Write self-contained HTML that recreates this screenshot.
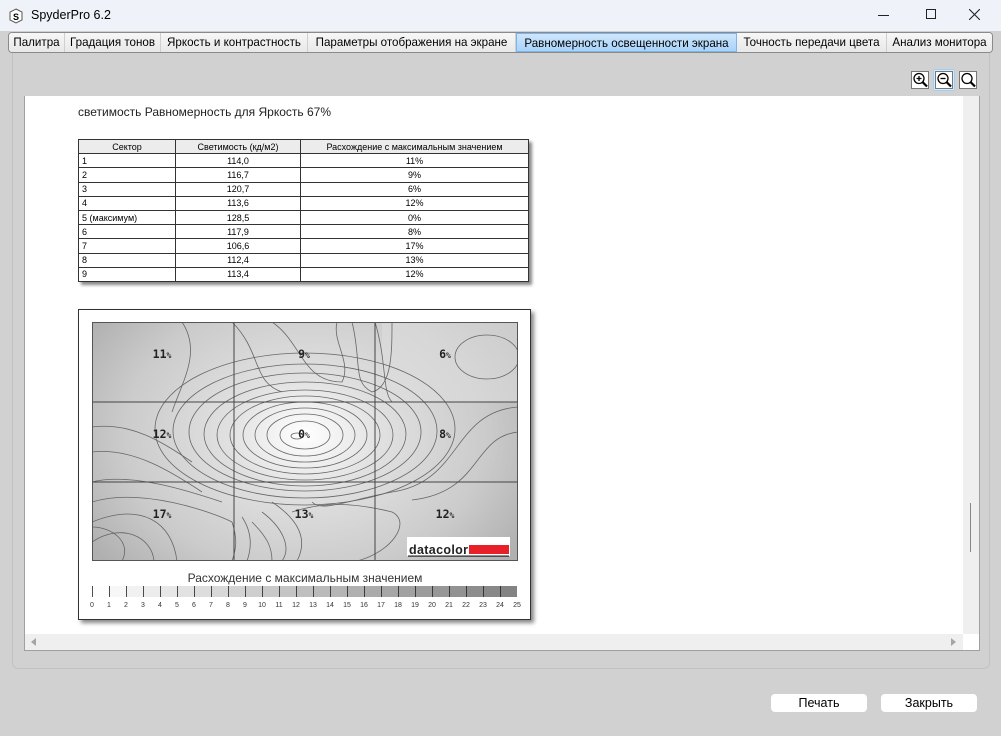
<!DOCTYPE html>
<html><head><meta charset="utf-8"><style>
*{margin:0;padding:0;box-sizing:border-box}
body{width:1001px;height:736px;overflow:hidden;background:#d1d1d1;font-family:"Liberation Sans","DejaVu Sans",sans-serif;position:relative}
.abs{position:absolute}
#title{left:0;top:0;width:1001px;height:31px;background:#eff3f9;}
#tabs{left:8px;top:32px;width:985px;height:21px;border:1px solid #8a8a8a;border-radius:4px;background:#f0f0f0;display:flex;font-size:11.6px;overflow:hidden}
#tabs div{text-align:center;line-height:19px;border-right:1px solid #cfcfcf;white-space:nowrap;overflow:hidden;background:linear-gradient(#f7f7f7,#e8e8e8);flex:none}
#tabs div.act{background:linear-gradient(#cde6fc,#a9d3fa);border:1px solid #7eb4ea}
table{border-collapse:collapse;font-size:9px;font-family:"Liberation Sans",sans-serif}
td{border:1px solid #333;height:14.2px;padding:0 3px;line-height:12px}
.btn{background:#fff;border-radius:4px;font-size:12.5px;text-align:center;line-height:18px;height:18px;top:694px}
</style></head><body>
<div id="title" class="abs">
 <svg class="abs" style="left:8px;top:8px" width="16" height="16"><path d="M8 1 L14 4 L14 12 L8 15 L2 12 L2 4 Z" fill="#fff" stroke="#555" stroke-width="1"/><text x="8" y="12" font-size="9" font-weight="bold" text-anchor="middle" font-family="Liberation Sans">S</text></svg>
 <div class="abs" style="left:31px;top:8px;font-size:12.5px">SpyderPro 6.2</div>
 <div class="abs" style="left:878px;top:15px;width:11px;height:1px;background:#222"></div>
 <div class="abs" style="left:926px;top:9px;width:10px;height:10px;border:1px solid #222"></div>
 <svg class="abs" style="left:969px;top:9px" width="11" height="11"><path d="M0 0L11 11M11 0L0 11" stroke="#222" stroke-width="1.1"/></svg>
</div>
<div id="tabs" class="abs">
 <div style="width:56px">Палитра</div><div style="width:96px">Градация тонов</div><div style="width:147px">Яркость и контрастность</div><div style="width:208px">Параметры отображения на экране</div><div class="act" style="width:221px">Равномерность освещенности экрана</div><div style="width:150px">Точность передачи цвета</div><div style="width:105px;border-right:none">Анализ монитора</div>
</div>
<div class="abs" style="left:12px;top:53px;width:978px;height:616px;border:1px solid #c2c2c2;border-top:none;border-radius:0 0 6px 6px"></div>
<div class="abs" style="left:911px;top:71px;width:18px;height:18px;border:1px solid #777;background:#fff"></div>
<div class="abs" style="left:933px;top:69px;width:22px;height:22px;border:1px solid #9cd0f8;background:#d8ecfb;border-radius:2px"></div>
<div class="abs" style="left:935px;top:71px;width:18px;height:18px;border:1px solid #777;background:#fff"></div>
<div class="abs" style="left:959px;top:71px;width:18px;height:18px;border:1px solid #777;background:#fff"></div>
<svg class="abs" style="left:911px;top:71px" width="70" height="18">
 <g fill="none" stroke="#000" stroke-width="1.3"><circle cx="8" cy="7.5" r="5"/><path d="M11.5 11 L16 15.5" stroke-width="2.2"/><path d="M5.5 7.5h5M8 5v5"/>
 <circle cx="32" cy="7.5" r="5"/><path d="M35.5 11 L40 15.5" stroke-width="2.2"/><path d="M29.5 7.5h5"/>
 <circle cx="56" cy="7.5" r="5"/><path d="M59.5 11 L64 15.5" stroke-width="2.2"/></g>
</svg>
<div class="abs" style="left:24px;top:96px;width:956px;height:555px;border:1px solid #a0a0a0;border-top:none;background:#fff"></div>
<div class="abs" style="left:963px;top:96px;width:16px;height:538px;background:#efefef"></div>
<div class="abs" style="left:970px;top:503px;width:1px;height:49px;background:#888"></div>
<div class="abs" style="left:25px;top:634px;width:938px;height:16px;background:#efefef"></div>
<svg class="abs" style="left:28px;top:636px" width="935" height="12"><path d="M3 6L8 2V10Z M928 6L923 2V10Z" fill="#a5a5a5"/></svg>
<div class="abs" style="left:78px;top:105px;font-size:12px;color:#222">светимость Равномерность для Яркость 67%</div>
<div class="abs" style="left:78px;top:139px;box-shadow:3px 3px 3px #888;background:#fff">
<table style="width:451px">
<tr style="background:#ececec;text-align:center"><td style="width:97px">Сектор</td><td style="width:125px">Светимость (кд/м2)</td><td>Расхождение с максимальным значением</td></tr>
<tr><td>1</td><td align=center>114,0</td><td align=center>11%</td></tr>
<tr><td>2</td><td align=center>116,7</td><td align=center>9%</td></tr>
<tr><td>3</td><td align=center>120,7</td><td align=center>6%</td></tr>
<tr><td>4</td><td align=center>113,6</td><td align=center>12%</td></tr>
<tr><td>5 (максимум)</td><td align=center>128,5</td><td align=center>0%</td></tr>
<tr><td>6</td><td align=center>117,9</td><td align=center>8%</td></tr>
<tr><td>7</td><td align=center>106,6</td><td align=center>17%</td></tr>
<tr><td>8</td><td align=center>112,4</td><td align=center>13%</td></tr>
<tr><td>9</td><td align=center>113,4</td><td align=center>12%</td></tr>
</table></div>
<div class="abs" style="left:78px;top:309px;width:453px;height:311px;border:1px solid #333;background:#fff;box-shadow:3px 3px 4px #888"></div>
<svg class="abs" style="left:92px;top:322px" width="426" height="239" font-family="DejaVu Sans Mono,monospace">
<defs><radialGradient id="g" cx="213" cy="113" r="260" gradientUnits="userSpaceOnUse" gradientTransform="translate(213 113) scale(1 0.75) translate(-213 -113)"><stop offset="0" stop-color="#fff"/><stop offset="0.3" stop-color="#e0e0e0"/><stop offset="0.7" stop-color="#cbcbcb"/><stop offset="1" stop-color="#b0b0b0"/></radialGradient></defs>
<rect width="426" height="239" fill="url(#g)"/>
<rect x="290" y="0" width="136" height="80" fill="#dedede" opacity=".6"/>
<g fill="none" stroke="#666" stroke-width=".8">
<ellipse cx="205" cy="114" rx="6" ry="3"/>
<ellipse cx="213" cy="113" rx="25" ry="14"/>
<ellipse cx="213" cy="113" rx="38" ry="21"/>
<ellipse cx="213" cy="113" rx="50" ry="27"/>
<ellipse cx="213" cy="113" rx="62" ry="33"/>
<ellipse cx="213" cy="113" rx="75" ry="39"/>
<ellipse cx="213" cy="113" rx="88" ry="45"/>
<ellipse cx="213" cy="112" rx="101" ry="52"/>
<ellipse cx="213" cy="110" rx="116" ry="59"/>
<ellipse cx="213" cy="109" rx="132" ry="67"/>
<ellipse cx="213" cy="107" rx="150" ry="76"/>
<ellipse cx="395" cy="35" rx="32" ry="22"/>
<path d="M90 0 C110 30 90 60 80 90"/>
<path d="M140 0 C170 30 160 60 190 70"/>
<path d="M180 0 C210 20 210 60 250 60 C260 40 240 20 245 0"/>
<path d="M260 0 C270 40 260 60 280 70 C300 65 300 30 300 0"/>
<path d="M283 0 C295 40 290 70 300 80"/>
<path d="M426 85 C360 90 370 160 300 170 C250 180 230 190 220 180"/>
<path d="M426 110 C380 115 390 170 320 178"/>
<path d="M0 105 C40 100 70 120 100 140"/>
<path d="M0 130 C40 125 80 150 110 170"/>
<path d="M0 160 C40 150 100 170 130 180"/>
<path d="M0 180 C50 165 120 190 140 200"/>
<path d="M0 200 C50 180 80 200 85 239"/>
<path d="M0 220 C30 200 60 215 62 239"/>
<path d="M150 195 C160 210 160 225 155 239"/>
<path d="M140 200 C145 215 145 225 140 239"/>
<path d="M160 200 C175 215 180 225 180 239"/>
<path d="M170 190 C190 205 200 225 190 239"/>
<path d="M180 180 C210 200 215 220 205 239"/>
<path d="M200 190 C230 180 260 180 300 190 C320 200 300 230 265 239"/>
<path d="M30 239 C40 220 20 205 0 205"/>
</g>
<g stroke="#444" stroke-width="1"><path d="M142 0V239M283 0V239M0 80H426M0 160H426"/></g>
<rect x=".5" y=".5" width="425" height="238" fill="none" stroke="#555"/>
<g font-size="11.5" font-weight="bold" fill="#222" text-anchor="middle">
<text x="70" y="36">11<tspan font-size="8">%</tspan></text><text x="212" y="36">9<tspan font-size="8">%</tspan></text><text x="353" y="36">6<tspan font-size="8">%</tspan></text>
<text x="70" y="116">12<tspan font-size="8">%</tspan></text><text x="212" y="116">0<tspan font-size="8">%</tspan></text><text x="353" y="116">8<tspan font-size="8">%</tspan></text>
<text x="70" y="196">17<tspan font-size="8">%</tspan></text><text x="212" y="196">13<tspan font-size="8">%</tspan></text><text x="353" y="196">12<tspan font-size="8">%</tspan></text>
</g>
<rect x="315" y="215" width="103" height="19" fill="#fff"/>
<text x="317" y="232" font-family="Liberation Sans" font-weight="bold" font-size="12.5" fill="#222" textLength="59">datacolor</text>
<rect x="377" y="223" width="40" height="9" fill="#e8202a"/>
<rect x="316" y="233.5" width="101" height="1.2" fill="#222"/>
</svg>
<div class="abs" style="left:92px;top:571px;width:426px;text-align:center;font-size:12px;color:#333">Расхождение с максимальным значением</div>
<svg class="abs" style="left:88px;top:585px" width="436" height="26" font-family="Liberation Sans" font-size="7" fill="#333">
<rect x="4" y="1" width="17" height="11" fill="#fdfdfd"/><rect x="21" y="1" width="17" height="11" fill="#f7f7f7"/><rect x="38" y="1" width="17" height="11" fill="#f1f1f1"/><rect x="55" y="1" width="17" height="11" fill="#ececec"/><rect x="72" y="1" width="17" height="11" fill="#e7e7e7"/><rect x="89" y="1" width="17" height="11" fill="#e2e2e2"/><rect x="106" y="1" width="17" height="11" fill="#dddddd"/><rect x="123" y="1" width="17" height="11" fill="#d8d8d8"/><rect x="140" y="1" width="17" height="11" fill="#d3d3d3"/><rect x="157" y="1" width="17" height="11" fill="#cecece"/><rect x="174" y="1" width="17" height="11" fill="#c9c9c9"/><rect x="191" y="1" width="17" height="11" fill="#c4c4c4"/><rect x="208" y="1" width="17" height="11" fill="#bfbfbf"/><rect x="225" y="1" width="17" height="11" fill="#bababa"/><rect x="242" y="1" width="17" height="11" fill="#b5b5b5"/><rect x="259" y="1" width="17" height="11" fill="#b0b0b0"/><rect x="276" y="1" width="17" height="11" fill="#ababab"/><rect x="293" y="1" width="17" height="11" fill="#a6a6a6"/><rect x="310" y="1" width="17" height="11" fill="#a1a1a1"/><rect x="327" y="1" width="17" height="11" fill="#9c9c9c"/><rect x="344" y="1" width="17" height="11" fill="#979797"/><rect x="361" y="1" width="17" height="11" fill="#929292"/><rect x="378" y="1" width="17" height="11" fill="#8d8d8d"/><rect x="395" y="1" width="17" height="11" fill="#888888"/><rect x="412" y="1" width="17" height="11" fill="#838383"/>
<path stroke="#222" stroke-width=".8" d="M4.5 1v11M21.5 1v11M38.5 1v11M55.5 1v11M72.5 1v11M89.5 1v11M106.5 1v11M123.5 1v11M140.5 1v11M157.5 1v11M174.5 1v11M191.5 1v11M208.5 1v11M225.5 1v11M242.5 1v11M259.5 1v11M276.5 1v11M293.5 1v11M310.5 1v11M327.5 1v11M344.5 1v11M361.5 1v11M378.5 1v11M395.5 1v11M412.5 1v11"/>
<g text-anchor="middle">
<text x="4" y="22">0</text><text x="21" y="22">1</text><text x="38" y="22">2</text><text x="55" y="22">3</text><text x="72" y="22">4</text><text x="89" y="22">5</text><text x="106" y="22">6</text><text x="123" y="22">7</text><text x="140" y="22">8</text><text x="157" y="22">9</text><text x="174" y="22">10</text><text x="191" y="22">11</text><text x="208" y="22">12</text><text x="225" y="22">13</text><text x="242" y="22">14</text><text x="259" y="22">15</text><text x="276" y="22">16</text><text x="293" y="22">17</text><text x="310" y="22">18</text><text x="327" y="22">19</text><text x="344" y="22">20</text><text x="361" y="22">21</text><text x="378" y="22">22</text><text x="395" y="22">23</text><text x="412" y="22">24</text><text x="429" y="22">25</text>
</g></svg>
<div class="abs btn" style="left:771px;width:96px">Печать</div>
<div class="abs btn" style="left:881px;width:96px">Закрыть</div>
</body></html>
